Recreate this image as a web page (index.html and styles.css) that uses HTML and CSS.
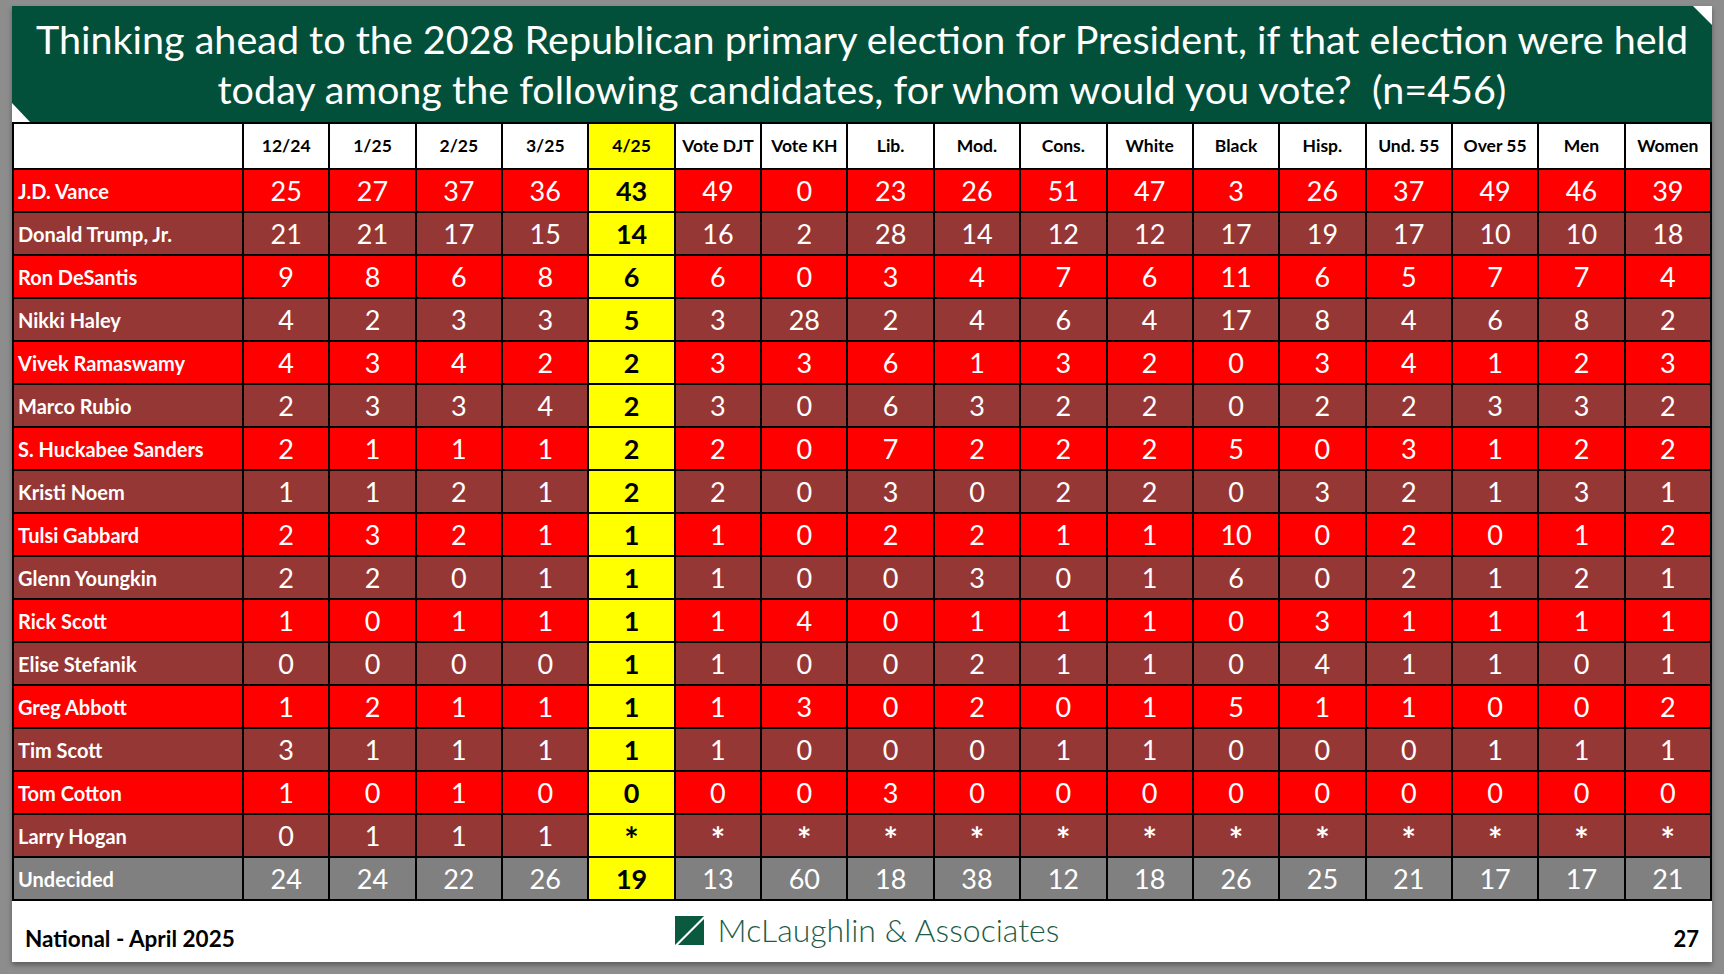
FILE: index.html
```html
<!DOCTYPE html>
<html lang="en">
<head>
<meta charset="utf-8">
<title>2028 Republican Primary</title>
<link rel="stylesheet" href="styles.css">
</head>
<body>
<div class="slide">
  <header class="title">
    <h1>Thinking ahead to the 2028 Republican primary election for President, if that election were held<br>today among the following candidates, for whom would you vote?&nbsp; (n=456)</h1>
  </header>
  <div class="grid">
    <div class="row head">
      <div class="name"></div><div>12/24</div><div>1/25</div><div>2/25</div><div>3/25</div><div class="y">4/25</div><div>Vote DJT</div><div>Vote KH</div><div>Lib.</div><div>Mod.</div><div>Cons.</div><div>White</div><div>Black</div><div>Hisp.</div><div>Und. 55</div><div>Over 55</div><div>Men</div><div>Women</div>
    </div>
    <div class="row red">
      <div class="name">J.D. Vance</div><div>25</div><div>27</div><div>37</div><div>36</div><div class="y">43</div><div>49</div><div>0</div><div>23</div><div>26</div><div>51</div><div>47</div><div>3</div><div>26</div><div>37</div><div>49</div><div>46</div><div>39</div>
    </div>
    <div class="row brown">
      <div class="name">Donald Trump, Jr.</div><div>21</div><div>21</div><div>17</div><div>15</div><div class="y">14</div><div>16</div><div>2</div><div>28</div><div>14</div><div>12</div><div>12</div><div>17</div><div>19</div><div>17</div><div>10</div><div>10</div><div>18</div>
    </div>
    <div class="row red">
      <div class="name">Ron DeSantis</div><div>9</div><div>8</div><div>6</div><div>8</div><div class="y">6</div><div>6</div><div>0</div><div>3</div><div>4</div><div>7</div><div>6</div><div>11</div><div>6</div><div>5</div><div>7</div><div>7</div><div>4</div>
    </div>
    <div class="row brown">
      <div class="name">Nikki Haley</div><div>4</div><div>2</div><div>3</div><div>3</div><div class="y">5</div><div>3</div><div>28</div><div>2</div><div>4</div><div>6</div><div>4</div><div>17</div><div>8</div><div>4</div><div>6</div><div>8</div><div>2</div>
    </div>
    <div class="row red">
      <div class="name">Vivek Ramaswamy</div><div>4</div><div>3</div><div>4</div><div>2</div><div class="y">2</div><div>3</div><div>3</div><div>6</div><div>1</div><div>3</div><div>2</div><div>0</div><div>3</div><div>4</div><div>1</div><div>2</div><div>3</div>
    </div>
    <div class="row brown">
      <div class="name">Marco Rubio</div><div>2</div><div>3</div><div>3</div><div>4</div><div class="y">2</div><div>3</div><div>0</div><div>6</div><div>3</div><div>2</div><div>2</div><div>0</div><div>2</div><div>2</div><div>3</div><div>3</div><div>2</div>
    </div>
    <div class="row red">
      <div class="name">S. Huckabee Sanders</div><div>2</div><div>1</div><div>1</div><div>1</div><div class="y">2</div><div>2</div><div>0</div><div>7</div><div>2</div><div>2</div><div>2</div><div>5</div><div>0</div><div>3</div><div>1</div><div>2</div><div>2</div>
    </div>
    <div class="row brown">
      <div class="name">Kristi Noem</div><div>1</div><div>1</div><div>2</div><div>1</div><div class="y">2</div><div>2</div><div>0</div><div>3</div><div>0</div><div>2</div><div>2</div><div>0</div><div>3</div><div>2</div><div>1</div><div>3</div><div>1</div>
    </div>
    <div class="row red">
      <div class="name">Tulsi Gabbard</div><div>2</div><div>3</div><div>2</div><div>1</div><div class="y">1</div><div>1</div><div>0</div><div>2</div><div>2</div><div>1</div><div>1</div><div>10</div><div>0</div><div>2</div><div>0</div><div>1</div><div>2</div>
    </div>
    <div class="row brown">
      <div class="name">Glenn Youngkin</div><div>2</div><div>2</div><div>0</div><div>1</div><div class="y">1</div><div>1</div><div>0</div><div>0</div><div>3</div><div>0</div><div>1</div><div>6</div><div>0</div><div>2</div><div>1</div><div>2</div><div>1</div>
    </div>
    <div class="row red">
      <div class="name">Rick Scott</div><div>1</div><div>0</div><div>1</div><div>1</div><div class="y">1</div><div>1</div><div>4</div><div>0</div><div>1</div><div>1</div><div>1</div><div>0</div><div>3</div><div>1</div><div>1</div><div>1</div><div>1</div>
    </div>
    <div class="row brown">
      <div class="name">Elise Stefanik</div><div>0</div><div>0</div><div>0</div><div>0</div><div class="y">1</div><div>1</div><div>0</div><div>0</div><div>2</div><div>1</div><div>1</div><div>0</div><div>4</div><div>1</div><div>1</div><div>0</div><div>1</div>
    </div>
    <div class="row red">
      <div class="name">Greg Abbott</div><div>1</div><div>2</div><div>1</div><div>1</div><div class="y">1</div><div>1</div><div>3</div><div>0</div><div>2</div><div>0</div><div>1</div><div>5</div><div>1</div><div>1</div><div>0</div><div>0</div><div>2</div>
    </div>
    <div class="row brown">
      <div class="name">Tim Scott</div><div>3</div><div>1</div><div>1</div><div>1</div><div class="y">1</div><div>1</div><div>0</div><div>0</div><div>0</div><div>1</div><div>1</div><div>0</div><div>0</div><div>0</div><div>1</div><div>1</div><div>1</div>
    </div>
    <div class="row red">
      <div class="name">Tom Cotton</div><div>1</div><div>0</div><div>1</div><div>0</div><div class="y">0</div><div>0</div><div>0</div><div>3</div><div>0</div><div>0</div><div>0</div><div>0</div><div>0</div><div>0</div><div>0</div><div>0</div><div>0</div>
    </div>
    <div class="row brown">
      <div class="name">Larry Hogan</div><div>0</div><div>1</div><div>1</div><div>1</div><div class="y ast">*</div><div class="ast">*</div><div class="ast">*</div><div class="ast">*</div><div class="ast">*</div><div class="ast">*</div><div class="ast">*</div><div class="ast">*</div><div class="ast">*</div><div class="ast">*</div><div class="ast">*</div><div class="ast">*</div><div class="ast">*</div>
    </div>
    <div class="row gray">
      <div class="name">Undecided</div><div>24</div><div>24</div><div>22</div><div>26</div><div class="y">19</div><div>13</div><div>60</div><div>18</div><div>38</div><div>12</div><div>18</div><div>26</div><div>25</div><div>21</div><div>17</div><div>17</div><div>21</div>
    </div>
  </div>
  <footer class="foot">
    <div class="place">National - April 2025</div>
    <div class="logo">
      <svg class="mark" width="29" height="29" viewBox="0 0 29 29" aria-hidden="true">
        <rect x="0" y="0" width="29" height="29" fill="#0b5a3f"/>
        <path d="M29 0 L29 3 L3 29 L0 29 Z" fill="#ffffff"/>
      </svg>
      <span class="firm">McLaughlin &amp; Associates</span>
    </div>
    <div class="page">27</div>
  </footer>
</div>
</body>
</html>
```

FILE: styles.css
```css
* { box-sizing: border-box; }

html, body {
  margin: 0;
  padding: 0;
}

body {
  background: #8d8d8d;
  width: 1724px;
  height: 974px;
  overflow: hidden;
  font-family: Lato, "Open Sans", "Liberation Sans", sans-serif;
}

.slide {
  margin: 6px 0 0 12px;
  width: 1700px;
  height: 956px;
  background: #ffffff;
  box-shadow: 0 3px 5px rgba(0, 0, 0, 0.35);
  display: flex;
  flex-direction: column;
}

.title {
  position: relative;
  height: 116px;
  background: #02503a;
  display: flex;
  align-items: center;
  justify-content: center;
}

.title::before {
  content: "";
  position: absolute;
  left: 0;
  bottom: 0;
  border-left: 18px solid #ffffff;
  border-top: 19px solid transparent;
}

.title::after {
  content: "";
  position: absolute;
  right: 0;
  top: 0;
  border-right: 19px solid #ffffff;
  border-bottom: 19px solid transparent;
}

.title h1 {
  margin: 0;
  color: #ffffff;
  font-weight: 400;
  font-size: 39.5px;
  line-height: 50px;
  text-align: center;
  letter-spacing: 0;
  white-space: nowrap;
}

.grid {
  background: #000000;
  padding: 2px;
  display: flex;
  flex-direction: column;
  gap: 2px;
}

.row {
  display: grid;
  grid-template-columns: 228px repeat(17, 1fr);
  gap: 2px;
  height: 41px;
}

.row > div {
  display: flex;
  align-items: center;
  justify-content: center;
  color: #ffffff;
  font-size: 27px;
  line-height: 1;
}

.row > .name {
  justify-content: flex-start;
  padding-left: 4px;
  font-size: 20px;
  font-weight: 700;
}

.row.head {
  height: 44px;
}

.row.head > div {
  background: #ffffff;
  color: #000000;
  font-size: 17.5px;
  font-weight: 700;
}

.red > div { background: #ff0000; }
.brown > div { background: #953735; }
.gray > div { background: #808080; }

.row > .y {
  background: #ffff00;
  color: #000000;
  font-weight: 700;
}

.row.head > .y {
  background: #ffff00;
}

.row > .ast {
  font-size: 34px;
  font-weight: 700;
  padding-top: 6px;
}

.foot {
  flex: 1;
  display: grid;
  grid-template-columns: 1fr auto 1fr;
  align-items: end;
  padding: 0 13px 10px 13px;
}

.place {
  font-size: 22.5px;
  font-weight: 700;
  color: #000000;
}

.logo {
  align-self: start;
  margin-top: 13px;
  margin-left: 10px;
  display: flex;
  align-items: center;
  gap: 14px;
}

.firm {
  font-size: 32px;
  font-weight: 300;
  color: #1d5c47;
  line-height: 1;
}

.page {
  justify-self: end;
  font-size: 22px;
  font-weight: 700;
  color: #000000;
}
```
